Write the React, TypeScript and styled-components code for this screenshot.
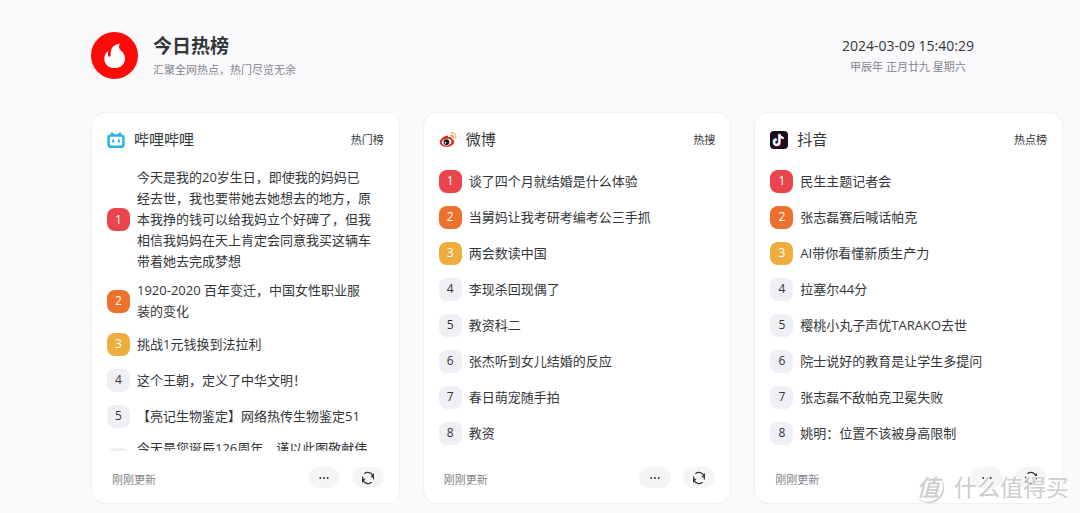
import React from "react";
import styled, { createGlobalStyle, css } from "styled-components";

const GlobalStyle = createGlobalStyle`
  * { box-sizing: border-box; }
  body {
    margin: 0;
    background: #fafafc;
    color: #333639;
    font-family: "Open Sans", "Noto Sans CJK SC", sans-serif;
    font-size: 13px;
  }
`;

const Page = styled.div`
  position: relative;
  padding: 32px 17px 9px 91px;
`;

const Header = styled.header`
  display: flex;
  align-items: center;
  justify-content: space-between;
  height: 47px;
  margin-bottom: 33px;
  padding-right: 89px;
`;

const Brand = styled.div`
  display: flex;
  align-items: center;
  gap: 15px;
`;

const BrandText = styled.div`
  display: flex;
  flex-direction: column;
  gap: 2px;
`;

const SiteName = styled.h1`
  margin: 0;
  font-size: 19px;
  line-height: 26px;
  font-weight: 700;
`;

const Muted = styled.span`
  font-size: 11px;
  line-height: 18px;
  color: #82868b;
`;

const Clock = styled.div`
  display: flex;
  flex-direction: column;
  align-items: center;
  gap: 2px;
`;

const Time = styled.time`
  font-size: 14px;
  line-height: 20px;
`;

const Grid = styled.main`
  display: grid;
  grid-template-columns: repeat(3, minmax(0, 1fr));
  gap: 23px;
`;

const Card = styled.section`
  padding: 15px;
  background: #fff;
  border: 1px solid #efeff5;
  border-radius: 14px;
`;

const CardHeader = styled.div`
  display: flex;
  align-items: center;
  height: 23px;
  margin-bottom: 12px;
`;

const CardTitle = styled.h2`
  flex: 1;
  margin: 0 0 0 9px;
  font-size: 15px;
  line-height: 23px;
  font-weight: 400;
`;

const BoardName = styled.span`
  font-size: 11px;
  line-height: 18px;
`;

const List = styled.ol`
  height: 288px;
  margin: 0;
  padding: 0;
  overflow: hidden;
  list-style: none;
`;

const Item = styled.li`
  display: flex;
  align-items: center;
  gap: 7px;
  min-height: 36px;
  padding: 4px 0;
`;

const rankColors: Record<number, string> = { 1: "#ea444d", 2: "#ed702d", 3: "#eead3f" };

const Rank = styled.span<{ $rank: number }>`
  display: flex;
  flex: none;
  align-items: center;
  justify-content: center;
  width: 23px;
  height: 23px;
  border-radius: 8px;
  font-size: 12px;
  line-height: 16px;
  ${({ $rank }) =>
    rankColors[$rank]
      ? css`
          background: ${rankColors[$rank]};
          color: #fff;
        `
      : css`
          background: #efeff5;
          color: #333639;
        `}
`;

const ItemLink = styled.a`
  color: inherit;
  text-decoration: none;
  line-height: 21px;
  white-space: pre-line;
`;

const CardFooter = styled.div`
  display: flex;
  align-items: center;
  gap: 12px;
  height: 21px;
  margin-top: 16px;
  padding-left: 5px;
`;

const Updated = styled(Muted)`
  flex: 1;
  padding-top: 4px;
`;

const PillButton = styled.button`
  display: flex;
  align-items: center;
  justify-content: center;
  width: 32px;
  height: 21px;
  padding: 0;
  border: 0;
  border-radius: 11px;
  background: #f4f6f6;
  color: #333639;
`;

const Watermark = styled.div`
  position: absolute;
  right: 11px;
  bottom: 10px;
  display: flex;
  align-items: center;
  gap: 11px;
  color: #cdcdcf;
  font-size: 23px;
  line-height: 32px;
  text-shadow: -1px -1px 0 #fff;
  pointer-events: none;
`;

const WatermarkSeal = styled.span`
  display: flex;
  align-items: center;
  justify-content: center;
  width: 30px;
  height: 30px;
  border-radius: 50%;
  background: #fff;
  box-shadow: 1px 1px 1px #c0c0c2;
  font-style: italic;
  font-weight: 500;
`;

const FlameLogo = () => (
  <svg width="47" height="47" viewBox="0 0 141 141" aria-hidden="true">
    <circle cx="70.5" cy="70.5" r="70.5" fill="#ff0909" />
    <path
      fill="#fff"
      d="M86 35C82 44 84 51 91 57C99 64 102 72 102 80C102 97 88 108 71 108C53 108 40 97 40 80C40 70 44 62 52 57C50 65 50 73 55 74C61 75 58 66 60 56C62 45 72 36 86 35Z"
    />
  </svg>
);

const BilibiliIcon = () => (
  <svg width="18" height="18" viewBox="0 0 18 18" fill="none" stroke="#2bb1e8" strokeLinecap="round" aria-hidden="true">
    <path strokeWidth="2.200" d="M4.800 2.300L6.500 4M13.200 2.300L11.500 4" />
    <rect x="1.600" y="4.400" width="14.800" height="11.400" rx="2.400" strokeWidth="2.500" />
    <path strokeWidth="2" d="M6.200 9.300V10.700M11.800 9.300V10.700" />
  </svg>
);

const WeiboIcon = () => (
  <svg width="18" height="18" viewBox="0 0 18 18" aria-hidden="true">
    <path
      fill="#d92a1c"
      d="M7.200 4.700C8.700 4.200 9.400 5 9 6.400C11.500 5.500 13.200 6 12.700 8C14.500 8.500 15.400 9.500 15.200 11C14.800 13.800 11.500 15.800 7.600 15.800C3.800 15.800.7 14 .7 11.300C.7 8.700 4.300 5.500 7.200 4.700Z"
    />
    <ellipse cx="7.600" cy="11.100" rx="4.900" ry="3.300" fill="#fff" transform="rotate(-7 7.600 11.100)" />
    <circle cx="7.400" cy="11.100" r="2.900" fill="#111" />
    <circle cx="6.500" cy="11.700" r=".9" fill="#fff" />
    <path d="M12 1.900C15.300 1.500 17.500 4.200 16.500 7.200" fill="none" stroke="#f8c07c" strokeWidth="1.800" strokeLinecap="round" />
    <path d="M12.100 4.600C13.500 4.300 14.500 5.400 14.100 6.700" fill="none" stroke="#f0806a" strokeWidth="1.500" strokeLinecap="round" />
  </svg>
);

const notePath = "M9.400 3.200V11.200A2.700 2.700 0 1 1 6.700 8.500M9.400 3.200C9.600 5.500 11.200 6.900 13.600 7";

const DouyinIcon = () => (
  <svg width="18" height="18" viewBox="0 0 18 18" fill="none" strokeWidth="2" aria-hidden="true">
    <rect width="18" height="18" rx="4" fill="#1c0b1c" />
    <path d={notePath} stroke="#25d9e4" transform="translate(-.5 -.4)" />
    <path d={notePath} stroke="#f0335b" transform="translate(.6 .5)" />
    <path d={notePath} stroke="#fff" />
  </svg>
);

const MoreIcon = () => (
  <svg width="12" height="12" viewBox="0 0 12 12" fill="currentColor" aria-hidden="true">
    <circle cx="2.300" cy="6" r="1" />
    <circle cx="6" cy="6" r="1" />
    <circle cx="9.700" cy="6" r="1" />
  </svg>
);

const RefreshIcon = () => (
  <svg width="14" height="14" viewBox="0 0 14 14" fill="none" stroke="currentColor" strokeWidth="1.200" aria-hidden="true">
    <path d="M3.400 2.700A5.500 5.500 0 0 1 12 5M10.600 11.300A5.500 5.500 0 0 1 2 9M1.600 8V5.600M12.400 6V8.400" />
    <path fill="currentColor" stroke="none" d="M13 2V6.300H9.300ZM1 12V7.700H4.700Z" />
  </svg>
);

const boards = [
  {
    name: "哔哩哔哩",
    board: "热门榜",
    icon: <BilibiliIcon />,
    items: [
      "今天是我的20岁生日，即使我的妈妈已\n经去世，我也要带她去她想去的地方，原\n本我挣的钱可以给我妈立个好碑了，但我\n相信我妈妈在天上肯定会同意我买这辆车\n带着她去完成梦想",
      "1920-2020 百年变迁，中国女性职业服\n装的变化",
      "挑战1元钱换到法拉利",
      "这个王朝，定义了中华文明！",
      "【亮记生物鉴定】网络热传生物鉴定51",
      "今天是您诞辰126周年，谨以此图敬献伟\n\u00a0",
    ],
  },
  {
    name: "微博",
    board: "热搜",
    icon: <WeiboIcon />,
    items: [
      "谈了四个月就结婚是什么体验",
      "当舅妈让我考研考编考公三手抓",
      "两会数读中国",
      "李现杀回现偶了",
      "教资科二",
      "张杰听到女儿结婚的反应",
      "春日萌宠随手拍",
      "教资",
    ],
  },
  {
    name: "抖音",
    board: "热点榜",
    icon: <DouyinIcon />,
    items: [
      "民生主题记者会",
      "张志磊赛后喊话帕克",
      "AI带你看懂新质生产力",
      "拉塞尔44分",
      "樱桃小丸子声优TARAKO去世",
      "院士说好的教育是让学生多提问",
      "张志磊不敌帕克卫冕失败",
      "姚明：位置不该被身高限制",
    ],
  },
];

export default function App() {
  return (
    <Page lang="zh-CN">
      <GlobalStyle />
      <Header>
        <Brand>
          <FlameLogo />
          <BrandText>
            <SiteName>今日热榜</SiteName>
            <Muted>汇聚全网热点，热门尽览无余</Muted>
          </BrandText>
        </Brand>
        <Clock>
          <Time dateTime="2024-03-09T15:40:29">2024-03-09 15:40:29</Time>
          <Muted>甲辰年 正月廿九 星期六</Muted>
        </Clock>
      </Header>
      <Grid>
        {boards.map((b) => (
          <Card key={b.name}>
            <CardHeader>
              {b.icon}
              <CardTitle>{b.name}</CardTitle>
              <BoardName>{b.board}</BoardName>
            </CardHeader>
            <List>
              {b.items.map((text, i) => (
                <Item key={text}>
                  <Rank $rank={i + 1}>{i + 1}</Rank>
                  <ItemLink href="#">{text}</ItemLink>
                </Item>
              ))}
            </List>
            <CardFooter>
              <Updated>刚刚更新</Updated>
              <PillButton type="button" aria-label="更多">
                <MoreIcon />
              </PillButton>
              <PillButton type="button" aria-label="刷新">
                <RefreshIcon />
              </PillButton>
            </CardFooter>
          </Card>
        ))}
      </Grid>
      <Watermark>
        <WatermarkSeal>值</WatermarkSeal>
        <span>什么值得买</span>
      </Watermark>
    </Page>
  );
}
